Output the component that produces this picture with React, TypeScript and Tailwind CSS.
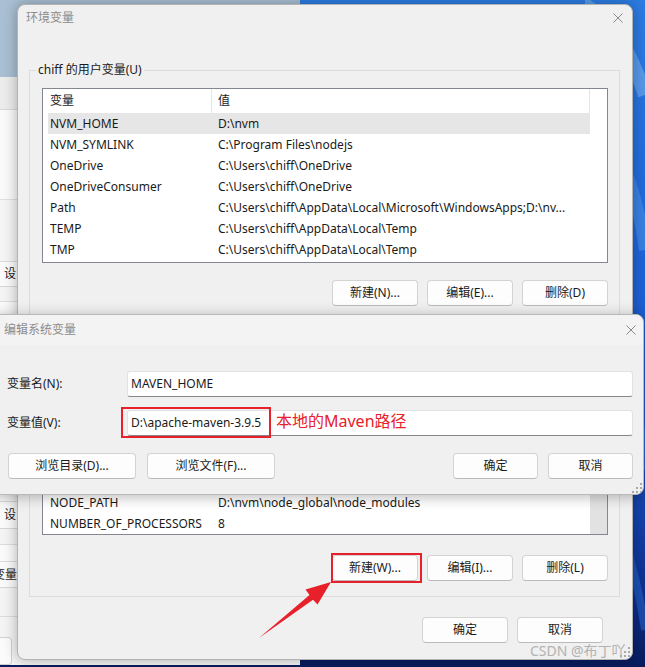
import React from "react";

type Row = [string, string];

const userVars: Row[] = [
  ["NVM_HOME", "D:\\nvm"],
  ["NVM_SYMLINK", "C:\\Program Files\\nodejs"],
  ["OneDrive", "C:\\Users\\chiff\\OneDrive"],
  ["OneDriveConsumer", "C:\\Users\\chiff\\OneDrive"],
  ["Path", "C:\\Users\\chiff\\AppData\\Local\\Microsoft\\WindowsApps;D:\\nv..."],
  ["TEMP", "C:\\Users\\chiff\\AppData\\Local\\Temp"],
  ["TMP", "C:\\Users\\chiff\\AppData\\Local\\Temp"],
];

// the first rows sit under the edit dialog, so they stay blank
const systemVars: Row[] = [
  ["", ""],
  ["", ""],
  ["", ""],
  ["", ""],
  ["", ""],
  ["NODE_PATH", "D:\\nvm\\node_global\\node_modules"],
  ["NUMBER_OF_PROCESSORS", "8"],
];

function CloseX() {
  return (
    <svg width="10" height="10" viewBox="0 0 10 10" className="shrink-0">
      <path d="M0.5 0.5 L9.5 9.5 M9.5 0.5 L0.5 9.5" stroke="#8a8a8a" strokeWidth="1" />
    </svg>
  );
}

function Grip() {
  return (
    <svg width="10" height="10" viewBox="0 0 10 10">
      <g fill="#a8a8a8">
        <rect x="8" y="0" width="2" height="2" />
        <rect x="4" y="4" width="2" height="2" />
        <rect x="8" y="4" width="2" height="2" />
        <rect x="0" y="8" width="2" height="2" />
        <rect x="4" y="8" width="2" height="2" />
        <rect x="8" y="8" width="2" height="2" />
      </g>
    </svg>
  );
}

function Btn({ children, className = "w-[86px]" }: { children: React.ReactNode; className?: string }) {
  return (
    <div
      className={`h-[26px] shrink-0 flex items-center justify-center rounded-[4px] border border-[#d3d3d3] border-b-[#bababa] bg-[#fdfdfd] text-[#1a1a1a] ${className}`}
    >
      {children}
    </div>
  );
}

function VarList({ rows, selected, scrollbar, header = true, className }: { rows: Row[]; selected?: number; scrollbar?: boolean; header?: boolean; className: string }) {
  return (
    <div className={`flex border border-[#828790] bg-white ${className}`}>
      <div className="flex-1 min-w-0 pl-[5px] flex flex-col">
        <div className="flex h-[24px] shrink-0 items-center">
          <div className="w-[163px] pl-[2px]">{header ? "变量" : ""}</div>
          <div className="w-px h-full bg-[#e5e5e5]" />
          <div className="flex-1 pl-[6px]">{header ? "值" : ""}</div>
          <div className="w-px h-full bg-[#e5e5e5]" />
        </div>
        {rows.map(([name, value], i) => (
          <div key={i} className={`flex h-[21px] shrink-0 items-center ${i === selected ? "bg-[#e6e6e6]" : ""}`}>
            <div className="w-[164px] pl-[2px] whitespace-nowrap overflow-hidden">{name}</div>
            <div className="flex-1 pl-[6px] whitespace-nowrap overflow-hidden">{value}</div>
          </div>
        ))}
      </div>
      <div className={`w-[17px] shrink-0 ${scrollbar ? "bg-[#e2e2e2]" : ""}`} />
    </div>
  );
}

function TextBox({ value }: { value: string }) {
  return (
    <div className="flex-1 h-[26px] flex items-center pl-[3px] bg-white border border-[#e2e2e2] border-b-[#868686] rounded-[3px]">
      {value}
    </div>
  );
}

function BackWindow() {
  return (
    <div className="absolute left-0 top-0 w-[300px] h-[665px] flex flex-col bg-[#f4f4f4]">
      <div className="h-[77px] shrink-0 bg-[#a9bfd3]" />
      <div className="h-[33px] shrink-0 bg-[#ececec] border-b border-[#d9d9d9]" />
      <div className="h-[90px] shrink-0 bg-[#fafafa] border-b border-[#e0e0e0]" />
      <div className="h-[62px] shrink-0 bg-[#f5f5f5] border-b border-[#dcdcdc]" />
      <div className="h-[25px] shrink-0 flex items-center pl-[4px] border-b border-[#d6d6d6] bg-[#fafafa]">设</div>
      <div className="h-[15px] shrink-0 border-b border-[#dcdcdc]" />
      <div className="h-[200px] shrink-0 border-b border-[#dcdcdc] bg-[#fafafa]" />
      <div className="h-[27px] shrink-0 flex items-center pl-[4px] border-b border-[#d6d6d6] bg-[#fafafa]">设</div>
      <div className="h-[16px] shrink-0 border-b border-[#dcdcdc]" />
      <div className="h-[17px] shrink-0 border-b border-[#dcdcdc] bg-[#fafafa]" />
      <div className="h-[26px] shrink-0 flex items-center border-b border-[#d6d6d6] bg-[#fafafa]">
        <span className="-ml-[7px]">变量</span>
      </div>
      <div className="h-[29px] shrink-0 border-b border-[#dcdcdc]" />
      <div className="h-[20px] shrink-0" />
      <div className="h-[28px] shrink-0">
        <div className="w-[12px] h-full rounded-r-[4px] border border-l-0 border-[#d0d0d0] bg-[#fbfbfb]" />
      </div>
    </div>
  );
}

function Wallpaper() {
  return (
    <svg className="absolute right-0 top-0" width="60" height="667" viewBox="0 0 60 667">
      <path d="M-10 0 C25 15 45 50 60 95" stroke="#8ec3f6" strokeOpacity="0.45" strokeWidth="14" fill="none" />
      <path d="M0 110 C35 140 52 190 60 250" stroke="#5fa6f0" strokeOpacity="0.4" strokeWidth="12" fill="none" />
      <path d="M15 290 C42 350 54 410 60 470" stroke="#3f8be8" strokeOpacity="0.4" strokeWidth="10" fill="none" />
      <path d="M25 500 C44 545 54 590 60 630" stroke="#2f74dc" strokeOpacity="0.45" strokeWidth="8" fill="none" />
    </svg>
  );
}

function EnvDialog() {
  return (
    <div className="absolute left-[17px] top-[4px] w-[616px] h-[656px] rounded-[8px] border border-[#b3b3b3] bg-[#f0f0f0] shadow-[0_0_14px_rgba(0,0,0,0.3)] flex flex-col overflow-hidden">
      <div className="h-[26px] shrink-0 flex items-center justify-between pl-[8px] pr-[9px]">
        <span className="text-[#8c8c8c]">环境变量</span>
        <CloseX />
      </div>

      <fieldset className="mt-[31px] ml-[11px] mr-[12px] min-w-0 border border-[#dcdcdc] pl-[12px] pr-[11px] pt-[10px] pb-[16px]">
        <legend className="-ml-[6px] px-[2px] h-[16px] leading-[16px]">chiff 的用户变量(U)</legend>
        <VarList rows={userVars} selected={0} className="h-[175px]" />
        <div className="mt-[17px] flex justify-end gap-[9px]">
          <Btn>新建(N)...</Btn>
          <Btn>编辑(E)...</Btn>
          <Btn>删除(D)</Btn>
        </div>
      </fieldset>

      {/* system variables: its top half lies under the edit dialog */}
      <fieldset className="mt-[13px] ml-[11px] mr-[12px] min-w-0 border border-[#dcdcdc] pl-[12px] pr-[11px] pt-[10px] pb-[15px]">
        <legend className="-ml-[6px] px-[2px] h-[16px] leading-[16px]"> </legend>
        <VarList rows={systemVars} header={false} scrollbar className="h-[173px] overflow-hidden" />
        <div className="mt-[20px] flex justify-end gap-[9px]">
          <Btn>新建(W)...</Btn>
          <Btn>编辑(I)...</Btn>
          <Btn>删除(L)</Btn>
        </div>
      </fieldset>

      <div className="mt-[20px] flex justify-end gap-[9px] pr-[29px]">
        <Btn>确定</Btn>
        <Btn>取消</Btn>
      </div>

      <div className="absolute right-[2px] bottom-[2px]">
        <Grip />
      </div>
    </div>
  );
}

function EditDialog() {
  return (
    <div className="absolute left-[-8px] top-[314px] w-[652px] h-[181px] rounded-[8px] border border-[#b9b9b9] bg-[#f0f0f0] shadow-[0_2px_14px_rgba(0,0,0,0.28)] flex flex-col overflow-hidden">
      <div className="h-[30px] shrink-0 bg-[#f3f3f3] flex items-center justify-between pl-[11px] pr-[7px]">
        <span className="text-[#8c8c8c]">编辑系统变量</span>
        <CloseX />
      </div>
      <div className="flex flex-col pl-[14px] pr-[10px]">
        <div className="mt-[26px] flex items-center h-[26px]">
          <div className="w-[120px] shrink-0">变量名(N):</div>
          <TextBox value="MAVEN_HOME" />
        </div>
        <div className="mt-[13px] flex items-center h-[26px]">
          <div className="w-[120px] shrink-0">变量值(V):</div>
          <TextBox value="D:\apache-maven-3.9.5" />
        </div>
        <div className="mt-[17px] flex items-center pl-[1px]">
          <Btn className="w-[128px]">浏览目录(D)...</Btn>
          <Btn className="w-[128px] ml-[11px]">浏览文件(F)...</Btn>
          <div className="flex-1" />
          <Btn className="w-[85px]">确定</Btn>
          <Btn className="w-[85px] ml-[10px]">取消</Btn>
        </div>
      </div>
      <div className="absolute right-[1px] bottom-[1px]">
        <Grip />
      </div>
    </div>
  );
}

export default function App() {
  return (
    <div className="relative w-[645px] h-[667px] overflow-hidden bg-[linear-gradient(180deg,#2c7ce2_0%,#1f66da_35%,#1a55cc_65%,#0c2a86_92%,#081c5c_100%)] font-['Noto_Sans','Noto_Sans_CJK_SC',sans-serif] text-[12px] text-[#1a1a1a]">
      <Wallpaper />
      <BackWindow />
      <EnvDialog />
      <EditDialog />

      {/* annotations */}
      <div className="absolute left-[121px] top-[407px] w-[150px] h-[31px] border-2 border-[#e8202a]" />
      <div className="absolute left-[276px] top-[410px] text-[16px] leading-[22px] text-[#e8202a]">本地的Maven路径</div>
      <div className="absolute left-[331px] top-[553px] w-[91px] h-[30px] border-2 border-[#e8202a]" />
      <svg className="absolute left-0 top-0" width="645" height="667" viewBox="0 0 645 667">
        <polygon points="259,638 309.5,595 305.5,589.5 331,582 317.5,604.5 313,599.7" fill="#e8202a" />
      </svg>

      <div className="absolute left-[530px] top-[641px] text-[14px] leading-[20px] text-[#b2b2b2] whitespace-nowrap">CSDN @布丁吖</div>
    </div>
  );
}
